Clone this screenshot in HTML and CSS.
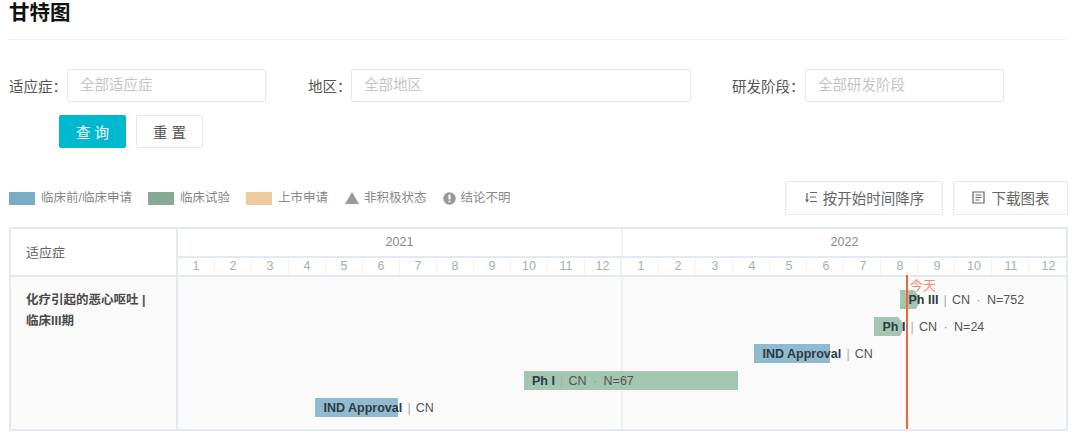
FILE: index.html
```html
<!DOCTYPE html>
<html lang="zh">
<head>
<meta charset="utf-8">
<title>甘特图</title>
<link rel="stylesheet" href="styles.css">
</head>
<body>
<main class="page">
  <h1 class="title">甘特图</h1>

  <section class="filters">
    <div class="filter filter-a"><label class="filter-label">适应症：</label><div class="field">全部适应症</div></div>
    <div class="filter filter-b"><label class="filter-label">地区：</label><div class="field">全部地区</div></div>
    <div class="filter filter-c"><label class="filter-label">研发阶段：</label><div class="field">全部研发阶段</div></div>
  </section>

  <div class="actions">
    <button class="btn btn-primary">查 询</button>
    <button class="btn btn-plain">重 置</button>
  </div>

  <section class="toolbar">
    <ul class="legend">
      <li class="legend-item"><span class="swatch swatch-blue"></span>临床前/临床申请</li>
      <li class="legend-item"><span class="swatch swatch-green"></span>临床试验</li>
      <li class="legend-item"><span class="swatch swatch-orange"></span>上市申请</li>
      <li class="legend-item"><svg class="legend-icon legend-triangle" width="14" height="12" viewBox="0 0 14 12"><path d="M7 0 14 12H0z" fill="#999"/></svg>非积极状态</li>
      <li class="legend-item"><svg class="legend-icon" width="13" height="13" viewBox="0 0 13 13"><circle cx="6.5" cy="6.5" r="6.2" fill="#999"/><rect x="5.5" y="2.6" width="2" height="5" rx=".6" fill="#fff"/><rect x="5.5" y="8.6" width="2" height="2" rx="1" fill="#fff"/></svg>结论不明</li>
    </ul>
    <div class="tools">
      <button class="tool tool-sort"><svg width="14" height="14" viewBox="0 0 14 14" fill="none" stroke="#666" stroke-width="1.2"><path d="M3 3v8M1.5 9.5l1.5 2 1.5-2M6 2.5h7M6 7h6M6 11.5h7"/></svg>按开始时间降序</button>
      <button class="tool tool-download"><svg width="13" height="13" viewBox="0 0 13 13" fill="none" stroke="#666" stroke-width="1.2"><path d="M1 1h11v11H1zM3.5 4h6M3.5 6.5h6M3.5 9h4"/></svg>下载图表</button>
    </div>
  </section>

  <section class="gantt">
    <div class="head-name">适应症</div>
    <div class="head-time">
      <div class="years"><div class="year">2021</div><div class="year">2022</div></div>
      <div class="months">
        <span>1</span><span>2</span><span>3</span><span>4</span><span>5</span><span>6</span><span>7</span><span>8</span><span>9</span><span>10</span><span>11</span><span>12</span>
        <span>1</span><span>2</span><span>3</span><span>4</span><span>5</span><span>6</span><span>7</span><span>8</span><span>9</span><span>10</span><span>11</span><span>12</span>
      </div>
    </div>
    <div class="row-name">化疗引起的恶心呕吐 | 临床III期</div>
    <div class="chart">
      <div class="bar" style="margin-left:722px;width:20px">
        <span class="shape shape-green shape-arrow"></span>
        <span class="label"><b>Ph III</b><i>|</i>CN<u>·</u>N=752</span>
      </div>
      <div class="bar" style="margin-left:696px;width:30px">
        <span class="shape shape-green shape-arrow"></span>
        <span class="label"><b>Ph I</b><i>|</i>CN<u>·</u>N=24</span>
      </div>
      <div class="bar" style="margin-left:576px;width:76px">
        <span class="shape shape-blue"></span>
        <span class="label"><b>IND Approval</b><i>|</i>CN</span>
      </div>
      <div class="bar" style="margin-left:345.5px;width:214.5px">
        <span class="shape shape-green"></span>
        <span class="label"><b>Ph I</b><i>|</i>CN<u>·</u>N=67</span>
      </div>
      <div class="bar" style="margin-left:137px;width:83px">
        <span class="shape shape-blue"></span>
        <span class="label"><b>IND Approval</b><i>|</i>CN</span>
      </div>
      <div class="today"><span class="today-text">今天</span></div>
    </div>
  </section>
</main>
</body>
</html>
```
FILE: styles.css
```css
* { box-sizing: border-box; }
html, body { margin: 0; background: #fff; }
body {
  font-family: "Liberation Sans", "Noto Sans CJK SC", sans-serif;
  font-size: 12.5px;
  color: #555;
}
.page { width: 1080px; height: 440px; padding: 0 12px 0 9px; overflow: hidden; }

.title {
  margin: 0;
  height: 40px;
  font-size: 20.5px;
  line-height: 26px;
  font-weight: 700;
  color: #111;
  border-bottom: 1px solid #f0f0f0;
}

.filters { display: flex; margin-top: 29px; }
.filter { display: flex; align-items: center; }
.filter-a { width: 299px; }
.filter-b { width: 424px; }
.filter-label { font-size: 14.5px; color: #555; white-space: nowrap; }
.filter-a .filter-label { width: 58px; }
.filter-b .filter-label { width: 43px; }
.filter-c .filter-label { width: 73px; }
.field {
  height: 33px;
  line-height: 31px;
  padding-left: 12px;
  border: 1px solid #e8e8e8;
  border-radius: 2px;
  font-size: 14.5px;
  color: #c4c4c4;
}
.filter-a .field { width: 199px; }
.filter-b .field { width: 340px; }
.filter-c .field { width: 199px; }

.actions { display: flex; gap: 10px; margin: 13px 0 0 50px; }
.btn {
  width: 67px;
  height: 33px;
  padding: 0;
  border-radius: 2px;
  font-family: inherit;
  font-size: 14.5px;
}
.btn-primary { background: #00b8d0; border: 1px solid #00b8d0; color: #fff; }
.btn-plain { background: #fff; border: 1px solid #e8e8e8; color: #555; }

.toolbar { display: flex; justify-content: space-between; align-items: center; margin-top: 33px; height: 34px; }
.legend { display: flex; margin: 0; padding: 0; list-style: none; line-height: 14px; }
.legend-item { display: flex; align-items: center; height: 14px; margin-right: 16px; color: #888; white-space: nowrap; }
.swatch { width: 26px; height: 13px; margin-right: 6px; }
.swatch-blue { background: #7aacc4; }
.swatch-green { background: #85a993; }
.swatch-orange { background: #edca9f; }
.legend-icon { margin-right: 5px; }
.legend-triangle { margin-left: 1px; }

.tools { display: flex; gap: 10px; }
.tool {
  display: flex;
  align-items: center;
  justify-content: center;
  gap: 5px;
  height: 34px;
  padding: 0 0 2px;
  background: #fff;
  border: 1px solid #e8e8e8;
  border-radius: 2px;
  font-family: inherit;
  font-size: 14.5px;
  color: #666;
}
.tool-sort { width: 158px; }
.tool-download { width: 115px; gap: 7px; }

.gantt {
  display: grid;
  grid-template-columns: 165px 888px;
  gap: 2px;
  width: 1059px;
  margin-top: 12px;
  background: #e3e9f2;
  border: 2px solid #e3e9f2;
}
.head-name {
  display: flex;
  align-items: center;
  padding: 0 0 2px 15px;
  background: #fff;
  font-size: 13px;
  color: #666;
}
.head-time { display: flex; flex-direction: column; gap: 2px; }
.years { display: grid; grid-template-columns: 443px 443px; height: 27px; gap: 2px; background: #eef1f6; }
.year { background: #fff; text-align: center; line-height: 26px; color: #888; }
.months { display: grid; grid-template-columns: repeat(24, 37px); height: 17px; background: #fff; }
.months span {
  text-align: center;
  line-height: 17px;
  color: #a8acb3;
  border-right: 1px solid #f1f3f7;
}
.months span:nth-child(12) { border-right: 2px solid #eef1f6; }
.months span:nth-child(n+13) { padding-left: 2px; }
.months span:last-child { border-right: 0; }
.row-name {
  height: 152px;
  padding: 13px 15px 0;
  background: #fafafa;
  font-size: 12.5px;
  line-height: 21px;
  font-weight: 700;
  color: #4a4a4a;
}
.chart {
  position: relative;
  height: 152px;
  padding-top: 13px;
  background: linear-gradient(#eef1f6, #eef1f6) 443px 0 / 2px 100% no-repeat, #fafafa;
}
.bar { position: relative; height: 19px; margin-bottom: 8px; }
.shape { position: absolute; inset: 0; }
.shape-green { background: #a3c6b0; }
.shape-blue { background: #90bbcf; }
.shape-arrow { clip-path: polygon(0 0, calc(100% - 6px) 0, 100% 40%, 100% 60%, calc(100% - 4px) 100%, 0 100%); }
.label {
  position: relative;
  display: block;
  padding: 1px 0 0 8.5px;
  line-height: 19px;
  white-space: nowrap;
  color: #555;
}
.label b { color: #2f3a45; font-weight: 700; }
.label i { margin: 0 5.2px; font-style: normal; font-weight: 400; color: #aaa; }
.label u { margin: 0 6.4px; text-decoration: none; color: #999; }
.today {
  position: absolute;
  top: -2px;
  bottom: 0;
  left: 728px;
  width: 2px;
  background: #f0663f;
}
.today-text {
  position: absolute;
  top: 3px;
  left: 4px;
  font-size: 13px;
  line-height: 15px;
  white-space: nowrap;
  color: #f58a6c;
}
```
